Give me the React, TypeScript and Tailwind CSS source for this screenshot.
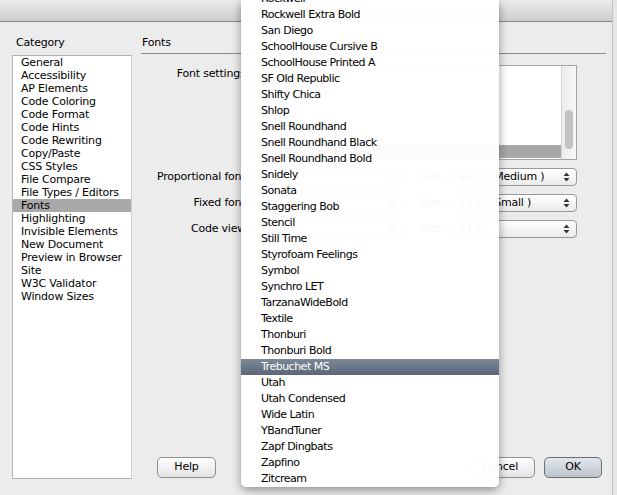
const categories = [
  "General",
  "Accessibility",
  "AP Elements",
  "Code Coloring",
  "Code Format",
  "Code Hints",
  "Code Rewriting",
  "Copy/Paste",
  "CSS Styles",
  "File Compare",
  "File Types / Editors",
  "Fonts",
  "Highlighting",
  "Invisible Elements",
  "New Document",
  "Preview in Browser",
  "Site",
  "W3C Validator",
  "Window Sizes",
];

const fonts = [
  "Rockwell",
  "Rockwell Extra Bold",
  "San Diego",
  "SchoolHouse Cursive B",
  "SchoolHouse Printed A",
  "SF Old Republic",
  "Shifty Chica",
  "Shlop",
  "Snell Roundhand",
  "Snell Roundhand Black",
  "Snell Roundhand Bold",
  "Snidely",
  "Sonata",
  "Staggering Bob",
  "Stencil",
  "Still Time",
  "Styrofoam Feelings",
  "Symbol",
  "Synchro LET",
  "TarzanaWideBold",
  "Textile",
  "Thonburi",
  "Thonburi Bold",
  "Trebuchet MS",
  "Utah",
  "Utah Condensed",
  "Wide Latin",
  "YBandTuner",
  "Zapf Dingbats",
  "Zapfino",
  "Zitcream",
];

// rows of the font settings list; only the selected one shows past the menu
const settingRows = [0, 1, 2, 3, 4, 5, 6];

const Arrows = () => (
  <svg width="7" height="10" viewBox="0 0 7 10">
    <path d="M3.5 0.5 L6.5 4 L0.5 4 Z" fill="#333" />
    <path d="M0.5 6 L6.5 6 L3.5 9.5 Z" fill="#333" />
  </svg>
);

const Select = ({ className = "", children }: { className?: string; children?: React.ReactNode }) => (
  <div
    className={`h-[18px] flex items-center justify-between rounded-[4px] border border-[#9a9a9a] bg-gradient-to-b from-white to-[#ebebeb] pl-[7px] pr-[6px] ${className}`}
  >
    <span className="whitespace-nowrap">{children}</span>
    <Arrows />
  </div>
);

const Button = ({ label, primary = false, className = "" }: { label: string; primary?: boolean; className?: string }) => (
  <div
    className={`h-[21px] flex items-center justify-center rounded-[5px] border ${
      primary
        ? "border-[#6e6e6e] bg-gradient-to-b from-[#e4e8ed] to-[#bcc3cc]"
        : "border-[#8f8f8f] bg-gradient-to-b from-white to-[#e4e4e4]"
    } ${className}`}
  >
    {label}
  </div>
);

export default function App() {
  return (
    <div className="relative w-[617px] h-[495px] overflow-hidden bg-[#e6e6e6] font-['DejaVu_Sans',sans-serif] text-[11px] tracking-[-0.2px] text-black">
      <div className="w-[613px] h-full flex flex-col bg-[#ececec] border-r border-[#c4c4c4]">
        <div className="h-[22px] shrink-0 bg-gradient-to-b from-[#ececec] to-[#cdcdcd] border-b border-[#8a8a8a]" />

        <div className="flex flex-1 pt-[14px] pb-[16px]">
          <div className="w-[120px] ml-[12px] flex flex-col">
            <div className="h-[13px] leading-[13px] pl-[4px] mb-[6px]">Category</div>
            <div className="flex-1 bg-white border border-[#b4b4b4] border-r-[#cfcfcf]">
              {categories.map((c) => (
                <div
                  key={c}
                  className={`h-[13px] leading-[13px] pl-[8px] whitespace-nowrap ${c === "Fonts" ? "bg-[#a9a9a9]" : ""}`}
                >
                  {c}
                </div>
              ))}
            </div>
          </div>

          <div className="w-[465px] ml-[9px] flex flex-col">
            <div className="h-[18px] leading-[13px] pl-[1px] border-b border-[#8b8b8b]">Fonts</div>

            <div className="grid grid-cols-[108px_322px] gap-x-[6px] gap-y-[8px] mt-[11px]">
              <div className="text-right pt-[2px] leading-[13px] whitespace-nowrap">Font settings:</div>
              <div className="h-[95px] flex border border-[#a4a4a4] bg-white">
                <div className="flex-1 pt-[1px]">
                  {settingRows.map((r) => (
                    <div key={r} className={`h-[13px] ${r === 6 ? "bg-[#a8a8a8]" : ""}`} />
                  ))}
                </div>
                <div className="w-[15px] border-l border-[#d6d6d6] bg-gradient-to-r from-[#ececec] to-[#f8f8f8] pt-[44px] flex justify-center">
                  <div className="w-[8px] h-[39px] rounded-full bg-[#c2c2c2]" />
                </div>
              </div>

              <div className="text-right self-center whitespace-nowrap">Proportional font:</div>
              <div className="flex items-center">
                <Select className="w-[148px]" />
                <span className="ml-[16px] w-[26px]">Size:</span>
                <Select className="flex-1 ml-[6px]">16 pt (Medium )</Select>
              </div>

              <div className="text-right self-center whitespace-nowrap">Fixed font:</div>
              <div className="flex items-center">
                <Select className="w-[148px]" />
                <span className="ml-[16px] w-[26px]">Size:</span>
                <Select className="flex-1 ml-[6px]">13 pt (Small )</Select>
              </div>

              <div className="text-right self-center whitespace-nowrap">Code view:</div>
              <div className="flex items-center">
                <Select className="w-[148px]" />
                <span className="ml-[16px] w-[26px]">Size:</span>
                <Select className="flex-1 ml-[6px]">11 pt</Select>
              </div>
            </div>

            <div className="flex-1" />

            <div className="flex items-center justify-between pl-[16px] pr-[4px] mb-[1px]">
              <Button label="Help" className="w-[59px]" />
              <div className="flex gap-[9px]">
                <Button label="Cancel" className="w-[70px]" />
                <Button label="OK" primary className="w-[58px]" />
              </div>
            </div>
          </div>
        </div>
      </div>

      <div className="absolute left-[241px] top-0 w-[258px] h-[487px] overflow-hidden rounded-b-[5px] bg-white/[0.97] shadow-[0_3px_10px_rgba(0,0,0,0.4)] tracking-[-0.5px]">
        <div className="-mt-[9px]">
          {fonts.map((f) => (
            <div
              key={f}
              className={`h-[16px] leading-[16px] pl-[20px] whitespace-nowrap ${
                f === "Trebuchet MS"
                  ? "bg-gradient-to-b from-[#7c8798] to-[#5b6678] text-white"
                  : ""
              }`}
            >
              {f}
            </div>
          ))}
        </div>
      </div>
    </div>
  );
}
